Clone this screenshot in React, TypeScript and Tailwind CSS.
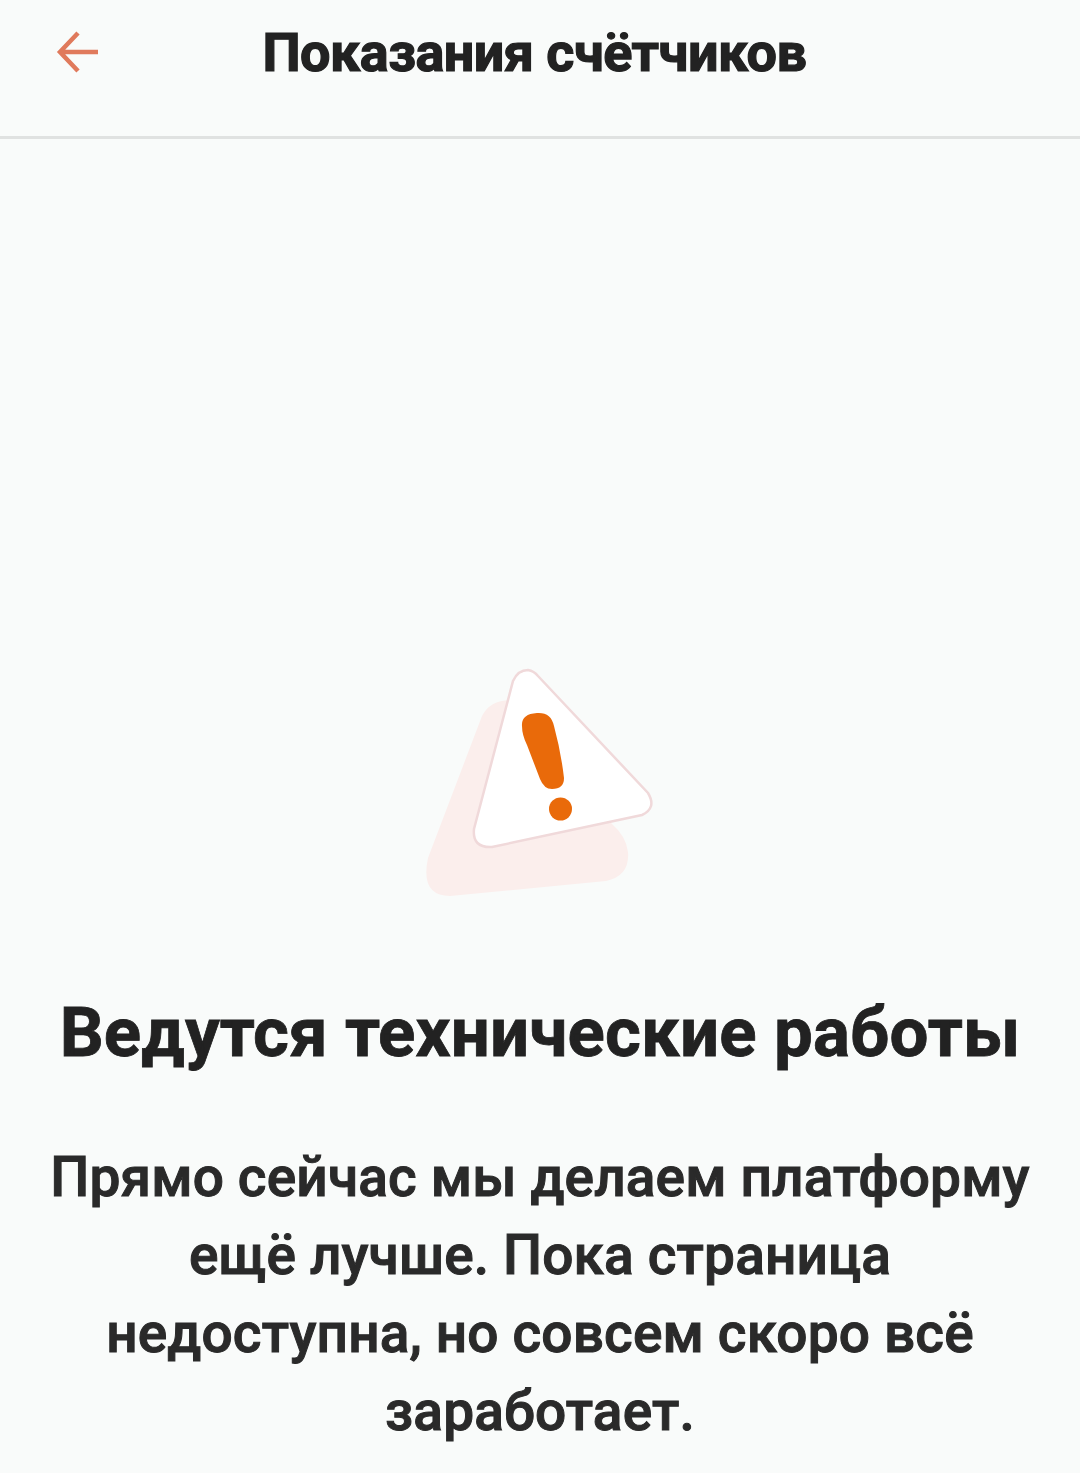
export default function App() {
  return (
    <div className="w-[1080px] h-[1473px] overflow-hidden bg-[#f9fbfa] font-['Roboto',sans-serif] flex flex-col">
      <header className="relative h-[139px] shrink-0 border-b-[3px] border-[#e0e2e1] flex items-start justify-center">
        <svg className="absolute left-[56px] top-[30px] w-[44px] h-[44px]" viewBox="0 0 44 44" fill="none" stroke="#e07a5c" strokeWidth="4.5" aria-hidden="true">
          <path d="M42 22H6M22 3L4 22L22 41" />
        </svg>
        <h1 className="mt-[21px] mr-[11px] text-[54px] leading-[64px] font-bold text-[#222222] tracking-[-0.55px] [-webkit-text-stroke:1.2px_#222222]">Показания счётчиков</h1>
      </header>

      <main className="flex flex-col items-center">
        <svg className="mt-[527px] w-[232px] h-[232px] shrink-0" viewBox="424 666 232 232" aria-hidden="true">
          <path d="M512 700 Q490 700 482 716 L428 858 Q420 896 450 896 L606 881 Q630 876 628 852 Q626 836 612 824 Z" fill="#fbeeec" />
          <path d="M513 681 Q518 670 528 670 Q534 671 538 676 L648 793 Q657 808 642 815 L492 847 Q472 848 474 829 Z" fill="#ffffff" stroke="#f0d9da" strokeWidth="2.5" />
          <path d="M522 726 Q521 714 537 713 Q551 712 554 726 Q561 752 564 778 Q564 789 552 789 Q544 789 540 779 L527 745 Q522 735 522 726 Z" fill="#e96a0a" />
          <circle cx="560.5" cy="809" r="11.5" fill="#e96a0a" />
        </svg>

        <h2 className="mt-[95px] text-[69px] leading-[80px] font-bold text-[#222222] tracking-[0.15px] whitespace-nowrap [-webkit-text-stroke:0.8px_#222222]">Ведутся технические работы</h2>

        <p className="mt-[65px] w-[1040px] text-center text-[55px] leading-[78px] font-medium tracking-[0.15px] text-[#2a2a2a] [-webkit-text-stroke:1px_#2a2a2a]">
          Прямо сейчас мы делаем платформу<br />
          ещё лучше. Пока страница<br />
          недоступна, но совсем скоро всё<br />
          заработает.
        </p>
      </main>
    </div>
  );
}
